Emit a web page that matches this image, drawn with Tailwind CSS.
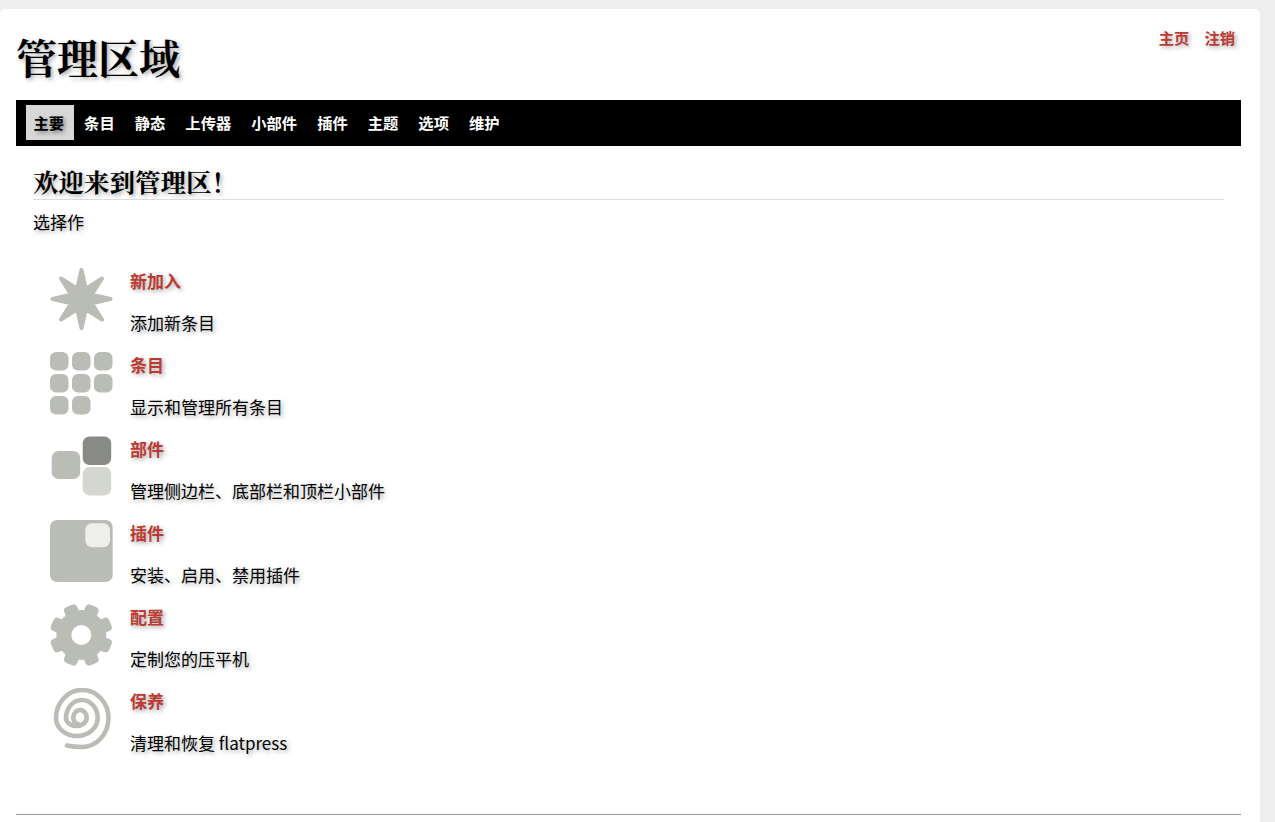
<!DOCTYPE html>
<html lang="zh">
<head>
  <meta charset="UTF-8">
  <title>管理区域</title>
  <script src="https://cdn.jsdelivr.net/npm/@tailwindcss/browser@4"></script>
</head>
<body class="bg-[#eeeeee] h-[822px] overflow-hidden font-['Noto_Sans_CJK_SC','Noto_Sans',sans-serif] text-black text-[17px] [text-shadow:2px_2px_4px_#aaa]">
  <div class="w-[1260px] h-[813px] mt-[9px] bg-white rounded-t-[5px] pl-4 pr-[19px] flex flex-col">
    <!-- header -->
    <header class="h-[91px] flex justify-between">
      <h1 class="mt-[25px] text-[41px] leading-[52px] font-bold font-['Liberation_Serif','Noto_Serif_CJK_SC',serif]">管理区域</h1>
      <div class="mt-[18px] mr-[6px] flex gap-[15px] text-[15.3px] leading-5 font-bold text-[#bb3a32]">
        <a href="#">主页</a>
        <a href="#">注销</a>
      </div>
    </header>

    <!-- menu -->
    <nav class="h-[46px] bg-black pl-[10px] pt-[5px] flex items-start gap-[3px] text-[15.3px] font-bold text-white [text-shadow:none]">
      <a href="#" class="h-[35px] pl-[7.5px] pr-[9.5px] leading-[34px] bg-[#d8d8d8] text-black [text-shadow:2px_2px_4px_#777]">主要</a>
      <a href="#" class="h-[35px] pl-[7.5px] pr-[9.5px] leading-[34px]">条目</a>
      <a href="#" class="h-[35px] pl-[7.5px] pr-[9.5px] leading-[34px]">静态</a>
      <a href="#" class="h-[35px] pl-[7.5px] pr-[9.5px] leading-[34px]">上传器</a>
      <a href="#" class="h-[35px] pl-[7.5px] pr-[9.5px] leading-[34px]">小部件</a>
      <a href="#" class="h-[35px] pl-[7.5px] pr-[9.5px] leading-[34px]">插件</a>
      <a href="#" class="h-[35px] pl-[7.5px] pr-[9.5px] leading-[34px]">主题</a>
      <a href="#" class="h-[35px] pl-[7.5px] pr-[9.5px] leading-[34px]">选项</a>
      <a href="#" class="h-[35px] pl-[7.5px] pr-[9.5px] leading-[34px]">维护</a>
    </nav>

    <main class="px-[17px] flex-1">
      <h2 class="mt-[19px] h-[35px] border-b border-[#dddddd] text-[25.5px] leading-[38px] font-bold font-['Liberation_Serif','Noto_Serif_CJK_SC',serif]">欢迎来到管理区！</h2>
      <p class="mt-[10px] leading-[24px]">选择作</p>

      <ul class="mt-[33px] pl-[17px] flex flex-col">
        <li class="h-[84px] flex gap-[16px]">
          <svg class="w-[64px] h-[64px] mt-[1px] shrink-0" viewBox="0 0 64 64">
            <path fill="#babdb6" stroke="#babdb6" stroke-width="4" stroke-linejoin="round" d="M31.5 2 35.8 20.7 52 10.5 41.8 26.7 60.5 31 41.8 35.3 52 51.5 35.8 41.3 31.5 60 27.2 41.3 11 51.5 21.2 35.3 2.5 31 21.2 26.7 11 10.5 27.2 20.7Z"/>
          </svg>
          <div>
            <a href="#" class="block mt-[2px] leading-[24px] font-bold text-[#bb3a32]">新加入</a>
            <p class="mt-[18px] leading-[24px]">添加新条目</p>
          </div>
        </li>
        <li class="h-[84px] flex gap-[16px]">
          <svg class="w-[64px] h-[64px] mt-[1px] shrink-0" viewBox="0 0 64 64" fill="#babdb6">
            <rect x="0" y="0" width="18.5" height="18.5" rx="6"/>
            <rect x="22" y="0" width="18.5" height="18.5" rx="6"/>
            <rect x="44" y="0" width="18.5" height="18.5" rx="6"/>
            <rect x="0" y="22" width="18.5" height="18.5" rx="6"/>
            <rect x="22" y="22" width="18.5" height="18.5" rx="6"/>
            <rect x="44" y="22" width="18.5" height="18.5" rx="6"/>
            <rect x="0" y="44" width="18.5" height="18.5" rx="6"/>
            <rect x="22" y="44" width="18.5" height="18.5" rx="6"/>
          </svg>
          <div>
            <a href="#" class="block mt-[2px] leading-[24px] font-bold text-[#bb3a32]">条目</a>
            <p class="mt-[18px] leading-[24px]">显示和管理所有条目</p>
          </div>
        </li>
        <li class="h-[84px] flex gap-[16px]">
          <svg class="w-[64px] h-[64px] mt-[1px] shrink-0" viewBox="0 0 64 64">
            <rect x="1.7" y="15" width="28.5" height="28" rx="7" fill="#babdb6"/>
            <rect x="32.7" y="0.5" width="28.5" height="28.5" rx="7" fill="#888a85"/>
            <rect x="32.7" y="31" width="28.5" height="28.5" rx="7" fill="#d3d7cf"/>
          </svg>
          <div>
            <a href="#" class="block mt-[2px] leading-[24px] font-bold text-[#bb3a32]">部件</a>
            <p class="mt-[18px] leading-[24px]">管理侧边栏、底部栏和顶栏小部件</p>
          </div>
        </li>
        <li class="h-[84px] flex gap-[16px]">
          <svg class="w-[64px] h-[64px] mt-[1px] shrink-0" viewBox="0 0 64 64">
            <rect x="0" y="0" width="62.7" height="62" rx="7" fill="#babdb6"/>
            <rect x="35.3" y="3.3" width="24.7" height="24" rx="7" fill="#eeeeec"/>
          </svg>
          <div>
            <a href="#" class="block mt-[2px] leading-[24px] font-bold text-[#bb3a32]">插件</a>
            <p class="mt-[18px] leading-[24px]">安装、启用、禁用插件</p>
          </div>
        </li>
        <li class="h-[84px] flex gap-[16px]">
          <svg class="w-[64px] h-[64px] mt-[1px] shrink-0" viewBox="0 0 64 64">
            <g fill="#babdb6" transform="translate(31.3 31)">
              <circle r="25"/>
              <rect x="-7" y="-31.5" width="14" height="14" rx="4" transform="rotate(22.5)"/>
              <rect x="-7" y="-31.5" width="14" height="14" rx="4" transform="rotate(67.5)"/>
              <rect x="-7" y="-31.5" width="14" height="14" rx="4" transform="rotate(112.5)"/>
              <rect x="-7" y="-31.5" width="14" height="14" rx="4" transform="rotate(157.5)"/>
              <rect x="-7" y="-31.5" width="14" height="14" rx="4" transform="rotate(202.5)"/>
              <rect x="-7" y="-31.5" width="14" height="14" rx="4" transform="rotate(247.5)"/>
              <rect x="-7" y="-31.5" width="14" height="14" rx="4" transform="rotate(292.5)"/>
              <rect x="-7" y="-31.5" width="14" height="14" rx="4" transform="rotate(337.5)"/>
              <circle r="10" fill="#fff"/>
            </g>
          </svg>
          <div>
            <a href="#" class="block mt-[2px] leading-[24px] font-bold text-[#bb3a32]">配置</a>
            <p class="mt-[18px] leading-[24px]">定制您的压平机</p>
          </div>
        </li>
        <li class="h-[84px] flex gap-[16px]">
          <svg class="w-[64px] h-[64px] mt-[1px] shrink-0" viewBox="0 0 64 64">
            <path fill="none" stroke="#babdb6" stroke-width="4.6" stroke-linecap="round" d="M17 57.5Q24 59 32 59A26.5 29 0 0 0 58.5 30A26.25 28 0 0 0 6 30A20.85 18 0 0 0 47.7 30A15.85 18 0 0 0 16 30A10.35 8 0 0 0 36.7 30A6.7 8 0 0 0 23.3 30Q23.5 35 28 36"/>
          </svg>
          <div>
            <a href="#" class="block mt-[2px] leading-[24px] font-bold text-[#bb3a32]">保养</a>
            <p class="mt-[18px] leading-[24px]">清理和恢复 flatpress</p>
          </div>
        </li>
      </ul>
    </main>

    <footer class="border-t border-[#999999] h-[8px]"></footer>
  </div>
</body>
</html>
